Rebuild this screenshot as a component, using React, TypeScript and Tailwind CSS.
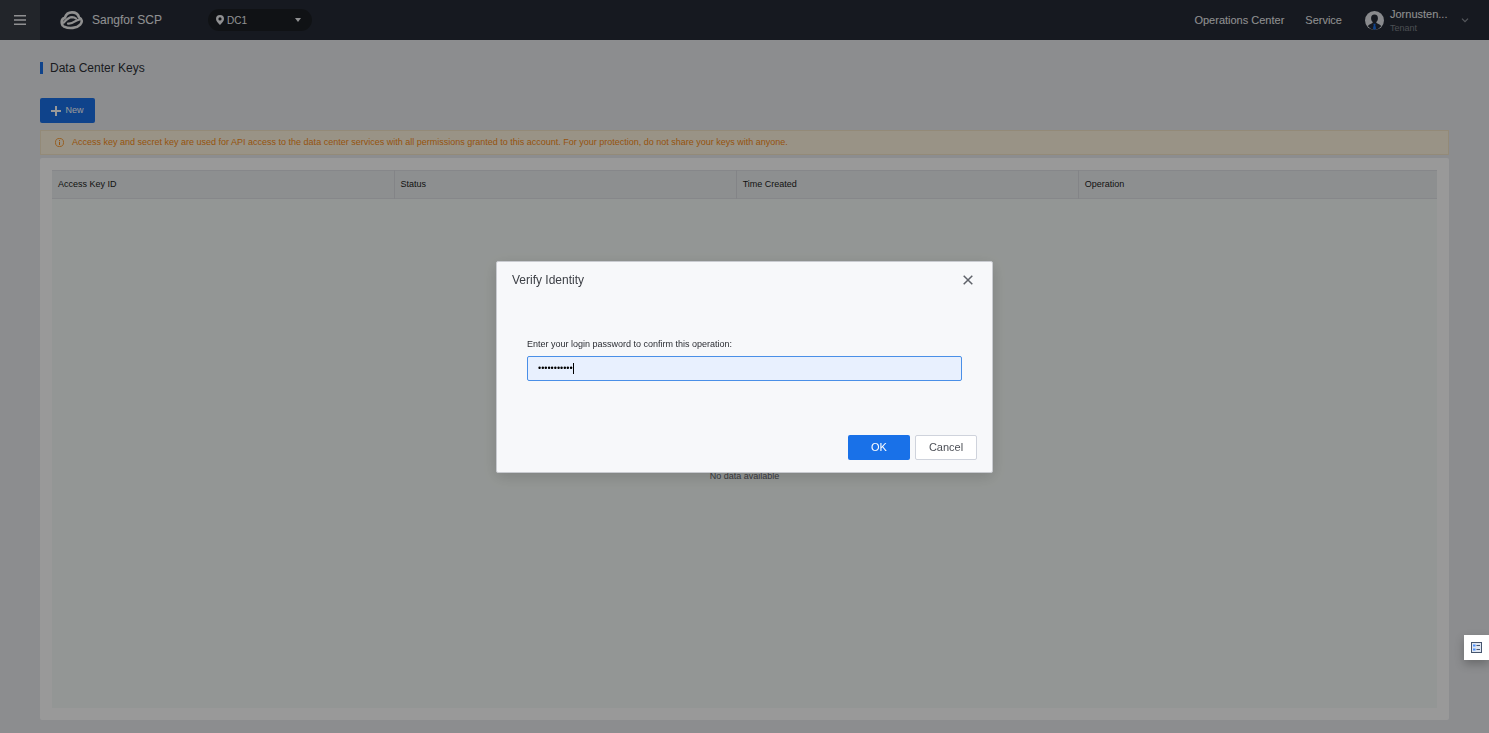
import { useState } from 'react'

const columns = ['Access Key ID', 'Status', 'Time Created', 'Operation']

function Logo() {
  return (
    <svg viewBox="0 0 24 20" className="h-5 w-6" fill="none" stroke="#f0f0f0" strokeLinecap="round" strokeLinejoin="round">
      <path d="M2.600 15.500C1 12 1.800 9 5 7.500 6 4.200 8.800 2.400 12 2.400c3.600 0 6.200 2 7 5 3.200 1.400 3.600 4.800 1.200 7.200C16.800 18.300 9.500 19 4 16.600" strokeWidth="2.600" />
      <path d="M3.600 12.600C6 10.200 8.500 7.300 12 7.200c1.800 0 3 .5 4 1.300" strokeWidth="2.200" />
      <path d="M8 13.600c3 .4 5-.8 7-2.200 1.400-.9 2.700-1.700 4.200-1.800" strokeWidth="2.200" />
    </svg>
  )
}

function Avatar() {
  return (
    <svg viewBox="0 0 20 20" className="size-[19px]">
      <circle cx="10" cy="10" r="10" fill="#e4e7ec" />
      <path d="M10 3.800c-2.400 0-3.700 1.700-3.600 4 .1 1.700.8 3 1.800 3.900-.1 1.300-1 1.700-3.400 2.500-.9.400-1.500 1-1.800 1.900A10 10 0 0 0 10 20a10 10 0 0 0 7-3.900c-.3-.9-.9-1.500-1.800-1.900-2.400-.8-3.300-1.200-3.400-2.500 1-.9 1.700-2.200 1.800-3.900.1-2.300-1.200-4-3.600-4z" fill="#262b36" />
      <path d="M8.800 13.500h2.400l-.4 1.500.9 3.500L10 20l-1.700-1.500.9-3.500z" fill="#1971eb" />
    </svg>
  )
}

function Header() {
  return (
    <header className="flex h-10 items-center bg-[#262b36] text-[11px] text-[#f0f1f3]">
      <button aria-label="Menu" className="flex size-10 items-center justify-center bg-[#393e46]">
        <svg viewBox="0 0 12 12" className="size-3" stroke="#f0f1f3" strokeWidth="1.500">
          <path d="M0 1.700h12M0 6h12M0 10.300h12" />
        </svg>
      </button>
      <div className="ml-5 flex items-center gap-2 text-[12px]">
        <Logo />
        <span>Sangfor SCP</span>
      </div>
      <button className="ml-[46px] flex h-[22px] w-26 items-center rounded-full bg-[#1c1f24] pr-[11px] pl-2 text-[10px]">
        <svg viewBox="0 0 8 10" className="mr-[3px]" width="8" height="10">
          <path fillRule="evenodd" d="M4 0a4 4 0 0 0-4 4c0 2.500 2.600 4.300 4 6 1.400-1.700 4-3.500 4-6a4 4 0 0 0-4-4zm0 2.300a1.600 1.600 0 1 1 0 3.200 1.600 1.600 0 0 1 0-3.200z" fill="#f0f1f3" />
        </svg>
        DC1
        <svg viewBox="0 0 6 4" className="ml-auto" width="6" height="4">
          <path d="M0 0h6L3 4z" fill="#f0f1f3" />
        </svg>
      </button>
      <nav className="ml-auto flex gap-[21px]">
        <a href="#operations">Operations Center</a>
        <a href="#service">Service</a>
      </nav>
      <button className="mr-5 ml-[23px] flex items-center text-left">
        <Avatar />
        <span className="ml-1.5 flex w-[59px] flex-col pt-0.5 leading-[14px]">
          <span>Jornusten...</span>
          <span className="text-[9px] text-[#7e828a]">Tenant</span>
        </span>
        <svg viewBox="0 0 8 5" className="ml-3" width="8" height="5" fill="none" stroke="#8e929a" strokeWidth="1.200">
          <path d="M1 .7l3 3 3-3" />
        </svg>
      </button>
    </header>
  )
}

function KeysTable() {
  return (
    <section className="flex flex-1 flex-col rounded-xs bg-white p-3">
      <table className="w-full table-fixed text-left text-[#1b1d21]">
        <colgroup>
          <col className="w-[24.7%]" />
          <col className="w-[24.7%]" />
          <col className="w-[24.7%]" />
          <col />
        </colgroup>
        <thead>
          <tr className="h-7 border-y border-[#dfe2e6] bg-[#ebeef0]">
            {columns.map(name => (
              <th key={name} className="border-r border-[#dadde2] px-1.5 font-normal last:border-r-0">{name}</th>
            ))}
          </tr>
        </thead>
      </table>
      <div className="flex flex-1 items-center justify-center bg-[#f6fbf8] pt-[46px] text-[#5d6066]">
        No data available
      </div>
    </section>
  )
}

function VerifyDialog() {
  const [password, setPassword] = useState('secretpass1')

  return (
    <div className="fixed inset-0 flex items-center justify-center bg-black/40">
      <form
        role="dialog"
        aria-labelledby="verify-title"
        onSubmit={e => e.preventDefault()}
        className="flex w-[497px] flex-col rounded-xs border border-[#c9cbd0] bg-[#f7f8fa] px-[15px] pb-3 shadow-[0_4px_16px_rgba(0,0,0,0.15)]"
      >
        <div className="flex h-9 items-center justify-between">
          <h2 id="verify-title" className="text-[12px] text-[#3c3f45]">Verify Identity</h2>
          <button type="button" aria-label="Close" className="flex w-[18px] items-center justify-center">
            <svg viewBox="0 0 10 10" className="size-2.5" stroke="#5f6269" strokeWidth="1.500">
              <path d="M.7.7l8.600 8.600M9.300.7L.7 9.300" />
            </svg>
          </button>
        </div>
        <div className="px-[15px] pt-10">
          <label htmlFor="password" className="block h-[18px] leading-3 text-[#2b2d33]">
            Enter your login password to confirm this operation:
          </label>
          <div className="relative">
            <input
              id="password"
              type="password"
              value={password}
              onChange={e => setPassword(e.target.value)}
              className="h-[25px] w-full rounded-xs border border-[#4a8fe7] bg-[#e8f0fe] px-2.5 text-black caret-transparent outline-none"
            />
            <span className="absolute top-[7px] left-[46px] h-[11px] w-px bg-black" />
          </div>
        </div>
        <div className="mt-[54px] flex justify-end gap-[5px] text-[11px]">
          <button type="submit" className="h-[25px] w-[62px] rounded-xs bg-[#1971e8] text-white">OK</button>
          <button type="button" className="h-[25px] w-[62px] rounded-xs border border-[#cfd3dc] bg-white text-[#4d5057]">Cancel</button>
        </div>
      </form>
    </div>
  )
}

export default function App() {
  return (
    <div className="flex min-h-screen flex-col bg-[#e9ebee] font-['Liberation_Sans',Arial,sans-serif] text-[9px]">
      <Header />
      <main className="flex flex-1 flex-col px-10 pb-[13px]">
        <h1 className="mt-5 flex items-center gap-[7px] text-[12px] leading-4 text-[#2d3036]">
          <span className="h-3 w-[3px] bg-[#1971e8]" />
          Data Center Keys
        </h1>
        <button className="mt-[22px] flex h-[25px] w-[55px] items-center justify-center gap-1 rounded-xs bg-[#1971e8] text-white">
          <svg viewBox="0 0 10 10" className="size-2.5" stroke="#fff" strokeWidth="2">
            <path d="M5 0v10M0 5h10" />
          </svg>
          New
        </button>
        <div className="mt-[7px] mb-[3px] flex h-[25px] items-center gap-2 border border-[#f5e6c8] bg-[#fff5df] px-3.5 text-[#fa8c16]">
          <svg viewBox="0 0 10 10" className="size-[9px]" fill="none" stroke="#fa8c16">
            <circle cx="5" cy="5" r="4.500" strokeWidth=".9" />
            <path d="M5 2.200v1.200M5 4.300v3.500" strokeWidth="1.100" />
          </svg>
          Access key and secret key are used for API access to the data center services with all permissions granted to this account. For your protection, do not share your keys with anyone.
        </div>
        <KeysTable />
      </main>
      <VerifyDialog />
      <button aria-label="Tasks" className="fixed right-0 bottom-[73px] flex size-[25px] items-center justify-center bg-white shadow-[0_4px_10px_rgba(0,0,0,0.25)]">
        <svg viewBox="0 0 11 11" className="size-[11px]">
          <rect x=".5" y=".5" width="10" height="10" fill="#dfe6f2" stroke="#46556e" />
          <path d="M2 3.500h2.500M2 7.500h2.500" stroke="#4a90ff" strokeWidth="2" />
          <path d="M5.500 3.500H9M5.500 7.500H9" stroke="#46556e" />
        </svg>
      </button>
    </div>
  )
}
